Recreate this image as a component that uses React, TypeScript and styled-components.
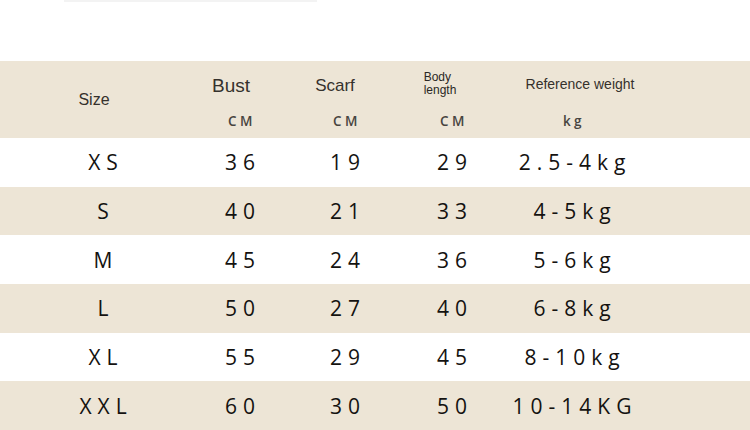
import React from "react";
import styled, { createGlobalStyle } from "styled-components";

const Global = createGlobalStyle`
  html, body { margin: 0; padding: 0; background: #ffffff; }
  body { width: 750px; height: 430px; overflow: hidden; }
`;

const Page = styled.div`
  width: 750px;
  height: 430px;
  display: flex;
  flex-direction: column;
  background: #ffffff;
`;

const TopRule = styled.div`
  margin-left: 64px;
  width: 253px;
  height: 2px;
  background: #f3f3f3;
`;

const Spacer = styled.div`
  height: 59px;
`;

const COLS = "138px 136px 74px 140px 100px";

const HeaderBand = styled.div`
  height: 77px;
  background: #ede5d6;
  display: grid;
  padding-left: 34px;
  grid-template-columns: ${COLS};
  grid-template-rows: 46px 31px;
`;

const TitleCell = styled.div<{ $shift: number; $span?: boolean; $pad?: number }>`
  display: flex;
  justify-content: center;
  align-items: center;
  padding-top: ${(p) => p.$pad ?? 0}px;
  grid-row: ${(p) => (p.$span ? "1 / span 2" : "1")};
  padding-left: ${(p) => (p.$shift > 0 ? p.$shift * 2 : 0)}px;
  padding-right: ${(p) => (p.$shift < 0 ? -p.$shift * 2 : 0)}px;
  white-space: nowrap;
`;

const Title = styled.span<{ $size: number }>`
  font-family: "Liberation Sans", Arial, sans-serif;
  font-size: ${(p) => p.$size}px;
  line-height: 1;
  color: #35312c;
`;

const StackTitle = styled.span`
  font-family: "Liberation Sans", Arial, sans-serif;
  font-size: 12px;
  line-height: 13px;
  color: #2a2724;
  display: flex;
  flex-direction: column;
  align-items: flex-start;
`;

const UnitCell = styled.div<{ $col: number }>`
  grid-row: 2;
  grid-column: ${(p) => p.$col};
  display: flex;
  justify-content: center;
  align-items: flex-start;
  padding-top: 6px;
  padding-left: 4px;
`;

const Unit = styled.span`
  font-family: "Open Sans", "DejaVu Sans", sans-serif;
  font-weight: 600;
  font-size: 13.5px;
  line-height: 16px;
  letter-spacing: 3.5px;
  color: #474440;
`;

const Row = styled.div<{ $shade: boolean }>`
  flex: 1;
  background: ${(p) => (p.$shade ? "#ede5d6" : "#ffffff")};
  display: grid;
  padding-left: 34px;
  grid-template-columns: ${COLS};
  align-items: center;
`;

const Cell = styled.div`
  display: flex;
  justify-content: center;
  padding-left: 6px;
  white-space: nowrap;
  font-family: "Open Sans", "DejaVu Sans", sans-serif;
  font-weight: 500;
  font-size: 21px;
  line-height: 24px;
  letter-spacing: 6px;
  color: #141210;
`;

const rows = [
  ["XS", "36", "19", "29", "2.5-4kg"],
  ["S", "40", "21", "33", "4-5kg"],
  ["M", "45", "24", "36", "5-6kg"],
  ["L", "50", "27", "40", "6-8kg"],
  ["XL", "55", "29", "45", "8-10kg"],
  ["XXL", "60", "30", "50", "10-14KG"],
];

export default function App() {
  return (
    <Page>
      <Global />
      <TopRule />
      <Spacer />
      <HeaderBand>
        <TitleCell $shift={-9} $span>
          <Title $size={16}>Size</Title>
        </TitleCell>
        <TitleCell $shift={-9} $pad={3}>
          <Title $size={19}>Bust</Title>
        </TitleCell>
        <TitleCell $shift={-10} $pad={3}>
          <Title $size={17}>Scarf</Title>
        </TitleCell>
        <TitleCell $shift={-12}>
          <StackTitle>
            <span>Body</span>
            <span>length</span>
          </StackTitle>
        </TitleCell>
        <TitleCell $shift={8}>
          <Title $size={14}>Reference weight</Title>
        </TitleCell>
        <UnitCell $col={2}>
          <Unit>CM</Unit>
        </UnitCell>
        <UnitCell $col={3}>
          <Unit>CM</Unit>
        </UnitCell>
        <UnitCell $col={4}>
          <Unit>CM</Unit>
        </UnitCell>
        <UnitCell $col={5}>
          <Unit>kg</Unit>
        </UnitCell>
      </HeaderBand>
      {rows.map((r, i) => (
        <Row key={r[0]} $shade={i % 2 === 1}>
          {r.map((v, j) => (
            <Cell key={j}>{v}</Cell>
          ))}
        </Row>
      ))}
    </Page>
  );
}
